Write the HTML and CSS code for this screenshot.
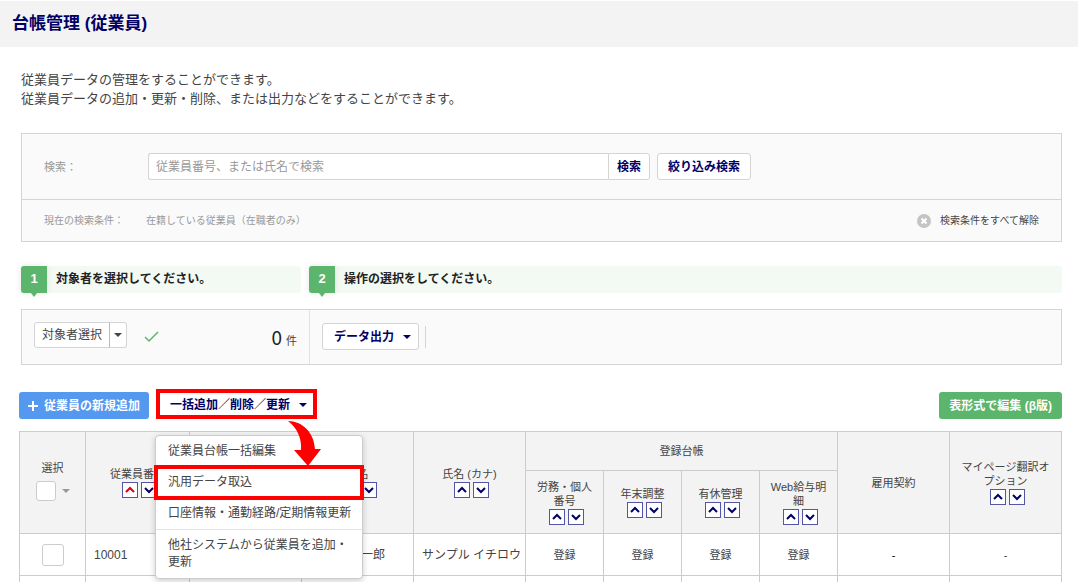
FILE: index.html
```html
<!DOCTYPE html>
<html lang="ja">
<head>
    <meta charset="utf-8">
    <title>台帳管理 (従業員)</title>
    <link rel="stylesheet" href="styles.css">
</head>
<body>
    <svg class="defs" aria-hidden="true">
        <symbol id="up" viewBox="0 0 14 14"><path d="M3 9 L7 5 L11 9"/></symbol>
        <symbol id="down" viewBox="0 0 14 14"><path d="M3 5 L7 9 L11 5"/></symbol>
    </svg>

    <header class="page-header">
        <h1>台帳管理 (従業員)</h1>
    </header>

    <main>
        <p class="intro">従業員データの管理をすることができます。<br>従業員データの追加・更新・削除、または出力などをすることができます。</p>

        <form class="panel">
            <div class="search-row">
                <label for="keyword" class="search-label">検索：</label>
                <div class="search-box">
                    <input type="text" id="keyword" placeholder="従業員番号、または氏名で検索">
                    <button type="button" class="btn">検索</button>
                </div>
                <button type="button" class="btn filter">絞り込み検索</button>
            </div>
            <div class="condition-row">
                <span class="condition-label">現在の検索条件：</span>
                <span>在籍している従業員（在職者のみ）</span>
                <button type="button" class="clear">
                    <svg width="14" height="14" viewBox="0 0 14 14"><circle cx="7" cy="7" r="7" fill="#c4c4c4"/><path d="M4.5 4.5 L9.5 9.5 M9.5 4.5 L4.5 9.5" stroke="#fff" stroke-width="2"/></svg>
                    検索条件をすべて解除
                </button>
            </div>
        </form>

        <div class="steps">
            <div class="step first"><span class="step-number">1</span><span>対象者を選択してください。</span></div>
            <div class="step"><span class="step-number">2</span><span>操作の選択をしてください。</span></div>
        </div>

        <div class="panel operation">
            <div class="target">
                <div class="split">
                    <button type="button" class="btn">対象者選択</button>
                    <button type="button" class="btn toggle" aria-label="対象者選択メニュー"><span class="caret"></span></button>
                </div>
                <svg class="check" width="15" height="12" viewBox="0 0 15 12"><path d="M1 6 L5 10 L14 1"/></svg>
                <div class="count"><span class="count-number">0</span>件</div>
            </div>
            <div class="output">
                <button type="button" class="btn">データ出力 <span class="caret"></span></button>
                <span class="divider"></span>
            </div>
        </div>

        <div class="toolbar">
            <button type="button" class="btn blue"><svg width="10" height="10" viewBox="0 0 10 10"><path d="M5 0 V10 M0 5 H10" stroke="#fff" stroke-width="2"/></svg>従業員の新規追加</button>
            <div class="dropdown">
                <button type="button" class="btn bulk">一括追加／削除／更新 <span class="caret"></span></button>
                <ul class="menu">
                    <li><a href="#">従業員台帳一括編集</a></li>
                    <li class="marked"><a href="#">汎用データ取込</a></li>
                    <li><a href="#">口座情報・通勤経路/定期情報更新</a></li>
                    <li class="separated"><a href="#">他社システムから従業員を追加・<br>更新</a></li>
                </ul>
                <svg class="arrow" width="34" height="46" viewBox="0 0 34 46"><path d="M0 1 C14 1 26 12 27 29 H33 L20 46 L6 30 H13 C14 18 9 8 0 1Z" fill="#f00"/></svg>
            </div>
            <button type="button" class="btn green">表形式で編集 (β版)</button>
        </div>

        <table class="ledger">
            <colgroup>
                <col class="col-check"><col class="col-number"><col class="col-name"><col class="col-name"><col class="col-name">
                <col class="col-book"><col class="col-book"><col class="col-book"><col class="col-book"><col class="col-name"><col>
            </colgroup>
            <thead>
                <tr class="group">
                    <th rowspan="2" class="select-all"><label for="all">選択</label>
                        <div class="check-all"><input type="checkbox" id="all"><span class="caret"></span></div></th>
                    <th rowspan="2">従業員番号
                        <div class="sort"><button type="button" class="active" aria-label="昇順"><svg><use href="#up"/></svg></button><button type="button" aria-label="降順"><svg><use href="#down"/></svg></button></div></th>
                    <th rowspan="2"></th>
                    <th rowspan="2">氏名
                        <div class="sort"><button type="button" aria-label="昇順"><svg><use href="#up"/></svg></button><button type="button" aria-label="降順"><svg><use href="#down"/></svg></button></div></th>
                    <th rowspan="2">氏名 (カナ)
                        <div class="sort"><button type="button" aria-label="昇順"><svg><use href="#up"/></svg></button><button type="button" aria-label="降順"><svg><use href="#down"/></svg></button></div></th>
                    <th colspan="4">登録台帳</th>
                    <th rowspan="2">雇用契約</th>
                    <th rowspan="2">マイページ翻訳オプション
                        <div class="sort"><button type="button" aria-label="昇順"><svg><use href="#up"/></svg></button><button type="button" aria-label="降順"><svg><use href="#down"/></svg></button></div></th>
                </tr>
                <tr class="books">
                    <th>労務・個人番号
                        <div class="sort"><button type="button" aria-label="昇順"><svg><use href="#up"/></svg></button><button type="button" aria-label="降順"><svg><use href="#down"/></svg></button></div></th>
                    <th>年末調整
                        <div class="sort"><button type="button" aria-label="昇順"><svg><use href="#up"/></svg></button><button type="button" aria-label="降順"><svg><use href="#down"/></svg></button></div></th>
                    <th>有休管理
                        <div class="sort"><button type="button" aria-label="昇順"><svg><use href="#up"/></svg></button><button type="button" aria-label="降順"><svg><use href="#down"/></svg></button></div></th>
                    <th>Web給与明細
                        <div class="sort"><button type="button" aria-label="昇順"><svg><use href="#up"/></svg></button><button type="button" aria-label="降順"><svg><use href="#down"/></svg></button></div></th>
                </tr>
            </thead>
            <tbody>
                <tr>
                    <td class="center"><input type="checkbox" aria-label="10001"></td>
                    <td>10001</td>
                    <td></td>
                    <td>サンプル 一郎</td>
                    <td>サンプル イチロウ</td>
                    <td class="center">登録</td>
                    <td class="center">登録</td>
                    <td class="center">登録</td>
                    <td class="center">登録</td>
                    <td class="center dark">-</td>
                    <td class="center">-</td>
                </tr>
                <tr>
                    <td></td><td></td><td></td><td></td><td></td><td></td><td></td><td></td><td></td><td></td><td></td>
                </tr>
            </tbody>
        </table>
    </main>
</body>
</html>
```

FILE: styles.css
```css
* {
    box-sizing: border-box;
}

body {
    margin: 0;
    height: 100vh;
    overflow: hidden;
    background-color: #fff;
    color: #444;
    font-family: "Liberation Sans", "Noto Sans CJK JP", sans-serif;
    font-size: 12px;
}

.defs {
    position: absolute;
    width: 0;
    height: 0;
}

.page-header {
    margin-top: 1px;
    padding: 0 12px;
    background-color: #f3f3f3;
}

h1 {
    margin: 0;
    color: #000066;
    font-size: 17px;
    line-height: 46px;
}

main {
    padding: 23px 16px 0 19px;
}

.intro {
    margin: 0 0 25px 2px;
    font-size: 13px;
    line-height: 19px;
}

button {
    font-family: inherit;
    cursor: pointer;
}

.btn {
    display: flex;
    align-items: center;
    justify-content: center;
    height: 27px;
    padding: 0 10px;
    border: 1px solid #d4d4d4;
    border-radius: 3px;
    background-color: #fff;
    color: #000066;
    font-size: 12px;
    font-weight: bold;
    line-height: 16px;
    white-space: nowrap;
}

.caret {
    flex: none;
    border: 4px solid transparent;
    border-top-color: currentColor;
    border-bottom: 0;
}

.panel {
    margin-left: 2px;
    border: 1px solid #d4d4d4;
    background-color: #fafafa;
}

.search-row {
    display: flex;
    align-items: center;
    padding: 19px 22px;
    color: #999;
}

.search-label {
    width: 104px;
    font-size: 11px;
    line-height: 16px;
}

.search-box {
    display: flex;
    flex: 0 1 502px;
}

.search-box input {
    flex: 1;
    min-width: 0;
    height: 27px;
    padding: 0 7px;
    border: 1px solid #d4d4d4;
    border-right: 0;
    border-radius: 3px 0 0 3px;
    font-family: inherit;
    font-size: 12px;
}

.search-box input::placeholder {
    color: #999;
}

.search-box .btn {
    padding: 0 8px;
    border-radius: 0 3px 3px 0;
}

.filter {
    margin-left: 7px;
}

.condition-row {
    display: flex;
    align-items: center;
    height: 42px;
    padding: 0 22px;
    border-top: 1px solid #d4d4d4;
    color: #999;
    font-size: 10px;
    line-height: 14px;
}

.condition-label {
    width: 102px;
}

.clear {
    display: flex;
    align-items: center;
    gap: 9px;
    margin-left: auto;
    padding: 0;
    border: 0;
    background: none;
    color: #444;
    font-size: 10px;
    line-height: 14px;
}

.steps {
    display: flex;
    gap: 8px;
    margin: 24px 0 16px 2px;
}

.step {
    display: flex;
    flex: 1;
    gap: 9px;
    border-radius: 3px;
    background-color: #f3faf4;
    color: #222;
    font-weight: bold;
    line-height: 26px;
}

.step.first {
    flex: 0 0 280px;
}

.step-number {
    position: relative;
    width: 26px;
    height: 27px;
    border-radius: 3px 0 0 3px;
    background-color: #5cb56c;
    box-shadow: 0 0 6px rgba(0, 0, 0, 0.1);
    color: #fff;
    font-size: 13px;
    text-align: center;
}

.step-number::after {
    content: "";
    position: absolute;
    top: 100%;
    left: 10px;
    border: 3px solid transparent;
    border-top: 4px solid #5cb56c;
    border-bottom: 0;
}

.operation {
    display: flex;
    height: 56px;
}

.target {
    display: flex;
    align-items: center;
    width: 288px;
    padding: 0 12px;
    border-right: 1px solid #e2e2e2;
}

.split {
    display: flex;
    margin-bottom: 4px;
}

.split .btn {
    height: 26px;
    padding: 0 7px;
    border-radius: 3px 0 0 3px;
    color: #444;
    font-weight: normal;
}

.split .toggle {
    margin-left: -1px;
    padding: 0 4px;
    border-left-color: #bbb;
    border-radius: 0 3px 3px 0;
}

.check {
    margin-left: 17px;
    fill: none;
    stroke: #5cb56c;
    stroke-width: 1.5;
}

.count {
    margin-left: auto;
    font-size: 11px;
}

.count-number {
    margin-right: 4px;
    color: #222;
    font-family: "Noto Sans CJK JP", sans-serif;
    font-size: 19px;
    line-height: 24px;
}

.output {
    display: flex;
    align-items: center;
    gap: 6px;
    padding: 0 12px 1px;
}

.output .btn {
    gap: 9px;
    padding: 0 7px 0 11px;
}

.divider {
    width: 1px;
    height: 22px;
    background-color: #d4d4d4;
}

.toolbar {
    display: flex;
    align-items: flex-end;
    margin: 24px 0 12px;
}

.blue {
    gap: 6px;
    padding: 0 9px;
    border: 0;
    background-color: #5598f0;
    color: #fff;
}

.green {
    margin-left: auto;
    border: 0;
    background-color: #5cb56c;
    color: #fff;
}

.dropdown {
    position: relative;
    margin-left: 7px;
}

.bulk {
    gap: 9px;
    height: 30px;
    padding: 2px 6px 0 10px;
    border: 4px solid #f00;
    border-radius: 0;
}

.menu {
    position: absolute;
    top: 46px;
    left: -1px;
    z-index: 1;
    width: 208px;
    margin: 0;
    padding: 0;
    border: 1px solid #ccc;
    border-radius: 4px;
    background-color: #fff;
    box-shadow: 0 2px 6px rgba(0, 0, 0, 0.2);
    list-style: none;
}

.menu a {
    display: block;
    padding: 7px 12px;
    color: #444;
    line-height: 17px;
    text-decoration: none;
    white-space: nowrap;
}

.marked {
    outline: 4px solid #f00;
    outline-offset: -2px;
}

.separated {
    border-top: 1px solid #e5e5e5;
}

.arrow {
    position: absolute;
    top: 31px;
    left: 132px;
    z-index: 2;
}

.ledger {
    width: 100%;
    border-collapse: collapse;
    table-layout: fixed;
}

.col-check {
    width: 66px;
}

.col-number {
    width: 104px;
}

.col-name {
    width: 112px;
}

.col-book {
    width: 78px;
}

.ledger th,
.ledger td {
    border: 1px solid #ccc;
}

.ledger th {
    padding: 0 8px;
    background-color: #f3f3f3;
    font-size: 11px;
    font-weight: normal;
    line-height: 14px;
    word-break: break-all;
}

.group {
    height: 39px;
}

.books {
    height: 63px;
}

.ledger td {
    height: 42px;
    padding: 0 8px;
    line-height: 16px;
    white-space: nowrap;
}

.ledger .center {
    font-size: 11px;
    text-align: center;
}

.ledger .dark {
    color: #000;
}

.ledger input {
    appearance: none;
    width: 22px;
    height: 22px;
    margin: 0;
    border: 1px solid #ccc;
    border-radius: 3px;
    background-color: #fff;
    vertical-align: middle;
}

.ledger .select-all {
    padding-bottom: 4px;
}

.check-all {
    display: flex;
    align-items: center;
    justify-content: center;
    gap: 6px;
    margin-top: 6px;
    color: #999;
}

.ledger .check-all input {
    width: 20px;
    height: 20px;
}

.sort {
    display: flex;
    justify-content: center;
    gap: 3px;
    margin-top: 1px;
    padding-left: 3px;
}

.sort button {
    width: 16px;
    height: 16px;
    padding: 0;
    border: 1px solid #5555a5;
    background-color: #fff;
    color: #000066;
}

.sort .active {
    color: #d9001b;
}

.sort svg {
    display: block;
    width: 14px;
    height: 14px;
    fill: none;
    stroke: currentColor;
    stroke-width: 2;
}
```
